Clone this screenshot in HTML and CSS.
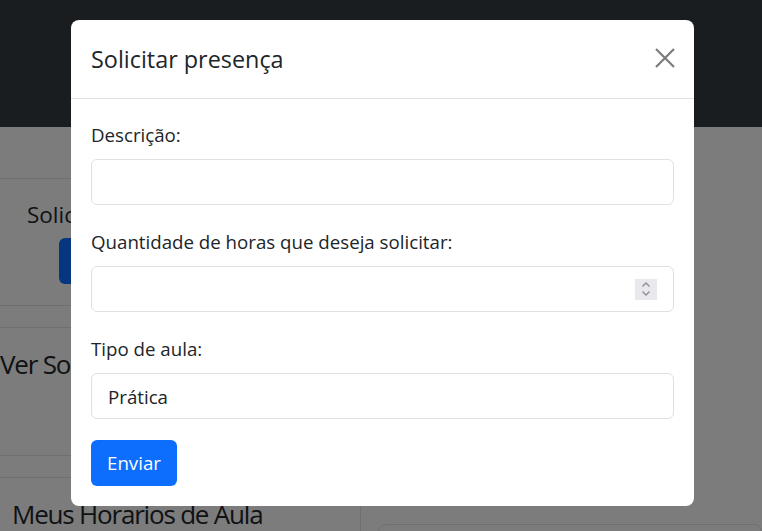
FILE: index.html
```html
<!DOCTYPE html>
<html lang="pt-BR">
<head>
<meta charset="utf-8">
<title>Solicitar presença</title>
<link rel="stylesheet" href="styles.css">
</head>
<body>
<nav class="navbar"></nav>
<main class="page">
  <aside class="sidebar">
    <section class="side-card card-one">
      <h4 class="side-title">Solicitar presença nas aulas</h4>
      <button class="side-btn" type="button">Solicitar</button>
    </section>
    <section class="side-card card-two">
      <h3 class="side-heading">Ver Solicitações</h3>
    </section>
    <section class="side-card card-three">
      <h3 class="side-heading indent">Meus Horarios de Aula</h3>
    </section>
  </aside>
  <div class="content">
    <div class="content-card"></div>
  </div>
</main>

<div class="backdrop"></div>

<div class="modal" role="dialog">
  <div class="modal-header">
    <h5 class="modal-title">Solicitar presença</h5>
    <button class="btn-close" type="button" aria-label="Fechar">
      <svg viewBox="0 0 20 20" width="20" height="20"><path d="M1 1L19 19M19 1L1 19" stroke="currentColor" stroke-width="2.2" fill="none"/></svg>
    </button>
  </div>
  <form class="modal-body">
    <div class="field">
      <label class="form-label">Descrição:</label>
      <input class="form-control" type="text">
    </div>
    <div class="field">
      <label class="form-label">Quantidade de horas que deseja solicitar:</label>
      <div class="form-control number-field">
        <input class="bare-input" type="text">
        <span class="spin">
          <svg viewBox="0 0 10 16" width="10" height="16"><path d="M1.5 5.5L5 2L8.5 5.5M1.5 10.5L5 14L8.5 10.5" stroke="currentColor" stroke-width="1.4" fill="none"/></svg>
        </span>
      </div>
    </div>
    <div class="field last">
      <label class="form-label">Tipo de aula:</label>
      <input class="form-control" type="text" value="Prática" readonly>
    </div>
    <button class="btn-primary" type="button">Enviar</button>
  </form>
</div>
</body>
</html>
```
FILE: styles.css
```css
* { box-sizing: border-box; }

html, body {
  margin: 0;
  height: 100%;
  overflow: hidden;
}

body {
  font-family: "Open Sans", "Noto Sans", sans-serif;
  font-size: 18.7px;
  line-height: 1.5;
  color: #212529;
  background: #f9f9f9;
}

.navbar {
  height: 127px;
  background: #343a40;
}

.page {
  display: grid;
  grid-template-columns: 361px 1fr;
  height: 404px;
  overflow: hidden;
}

.sidebar {
  padding-top: 51px;
}

.side-card {
  border-top: 1px solid #dcdfe3;
  border-bottom: 1px solid #dcdfe3;
  border-right: 1px solid #dcdfe3;
  margin-bottom: 21px;
}

.card-one {
  height: 128px;
  padding: 22px 0 0 27px;
}

.side-title {
  margin: 0 0 9px;
  font-size: 22.5px;
  font-weight: 400;
  line-height: 28px;
  white-space: nowrap;
}

.side-btn {
  margin-left: 32px;
  width: 150px;
  height: 46px;
  border: 0;
  border-radius: 6px;
  background: #0d6efd;
  color: #fff;
  font: inherit;
}

.card-two {
  height: 129px;
  padding-top: 21px;
}

.card-three {
  height: 120px;
  padding-top: 21px;
}

.side-heading {
  margin: 0;
  font-size: 26px;
  font-weight: 400;
  line-height: 31px;
  letter-spacing: -1.2px;
  white-space: nowrap;
}

.side-heading.indent {
  padding-left: 12px;
}

.content {
  padding: 397px 0 0 17px;
}

.content-card {
  height: 120px;
  border: 1px solid #dcdfe3;
  border-radius: 8px;
  background: #f9f9f9;
}

.backdrop {
  position: fixed;
  inset: 0;
  background: rgba(0, 0, 0, 0.5);
}

.modal {
  position: fixed;
  top: 20px;
  left: 71px;
  width: 623px;
  background: #fff;
  border-radius: 8px;
}

.modal-header {
  display: flex;
  align-items: center;
  justify-content: space-between;
  height: 79px;
  padding: 0 19px 0 20px;
  border-bottom: 1px solid #dee2e6;
}

.modal-title {
  margin: 0;
  font-size: 23.4px;
  font-weight: 400;
  line-height: 34px;
}

.btn-close {
  display: flex;
  padding: 0;
  margin-top: -2px;
  border: 0;
  background: none;
  color: #7c7c7c;
}

.modal-body {
  padding: 22px 20px 20px;
}

.field {
  margin-bottom: 23px;
}

.field.last {
  margin-bottom: 21px;
}

.form-label {
  display: block;
  margin-bottom: 10px;
  line-height: 28px;
}

.form-control {
  display: block;
  width: 100%;
  height: 46px;
  padding: 0 16px;
  border: 1px solid #dee2e6;
  border-radius: 6px;
  background: #fff;
  font: inherit;
  color: #212529;
  outline: none;
}

.number-field {
  display: flex;
  align-items: center;
  padding-right: 16px;
}

.bare-input {
  flex: 1;
  min-width: 0;
  border: 0;
  padding: 0;
  font: inherit;
  outline: none;
  background: transparent;
}

.spin {
  display: flex;
  align-items: center;
  justify-content: center;
  width: 22px;
  height: 21px;
  background: #e9e9ed;
  color: #8d8d99;
}

.btn-primary {
  display: block;
  height: 46px;
  padding: 0 16px;
  border: 0;
  border-radius: 6px;
  background: #0d6efd;
  color: #fff;
  font: inherit;
}
```
